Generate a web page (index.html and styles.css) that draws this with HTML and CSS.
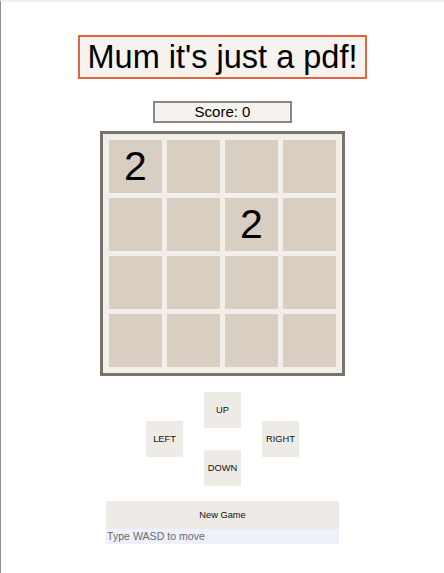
FILE: index.html
```html
<!DOCTYPE html>
<html lang="en">
<head>
    <meta charset="UTF-8">
    <meta name="viewport" content="width=device-width, initial-scale=1.0">
    <title>Mum it's just a pdf!</title>
    <link rel="stylesheet" href="styles.css">
</head>
<body>
    <div class="page">
        <h1 class="title">Mum it's just a pdf!</h1>
        <div class="score">Score: 0</div>

        <div class="board">
            <div class="cell">2</div>
            <div class="cell"></div>
            <div class="cell"></div>
            <div class="cell"></div>
            <div class="cell"></div>
            <div class="cell"></div>
            <div class="cell">2</div>
            <div class="cell"></div>
            <div class="cell"></div>
            <div class="cell"></div>
            <div class="cell"></div>
            <div class="cell"></div>
            <div class="cell"></div>
            <div class="cell"></div>
            <div class="cell"></div>
            <div class="cell"></div>
        </div>

        <div class="controls">
            <button class="ctrl up">UP</button>
            <button class="ctrl left">LEFT</button>
            <button class="ctrl right">RIGHT</button>
            <button class="ctrl down">DOWN</button>
        </div>

        <div class="footer">
            <button class="new-game">New Game</button>
            <div class="hint">Type WASD to move</div>
        </div>
    </div>
</body>
</html>
```

FILE: styles.css
```css
* {
    margin: 0;
    padding: 0;
    box-sizing: border-box;
    font-family: "Liberation Sans", Arial, sans-serif;
}
body {
    background: #fff;
    color: #000;
    border-left: 1px solid #8f8f8f;
    border-top: 2px solid #f1f1f1;
    min-height: 100vh;
}
.page {
    display: flex;
    flex-direction: column;
    align-items: center;
    padding-top: 33px;
}
.title {
    font-weight: normal;
    font-size: 32.5px;
    line-height: 38px;
    padding: 1px 8px 1px 8px;
    background: #f6f3ef;
    border: 2px solid #e4633f;
}
.score {
    margin-top: 22px;
    width: 139px;
    height: 22px;
    font-size: 15px;
    line-height: 18px;
    text-align: center;
    background: #f6f3ef;
    border: 2px solid #8a857e;
}
.board {
    margin-top: 8px;
    display: grid;
    grid-template-columns: repeat(4, 53px);
    grid-template-rows: repeat(4, 53px);
    gap: 5px;
    padding: 6px;
    background: #f2efea;
    border: 3px solid #79736b;
}
.cell {
    background: #d8cec2;
    display: flex;
    justify-content: center;
    align-items: center;
    font-size: 41px;
}
.controls {
    margin-top: 16px;
    display: grid;
    grid-template-columns: repeat(3, 37px);
    grid-template-rows: repeat(4, 7px);
    column-gap: 21px;
    row-gap: 22px;
}
.ctrl {
    border: none;
    background: #eeebe6;
    color: #111;
    font-size: 9.3px;
}
.up {
    grid-column: 2;
    grid-row: 1 / 3;
}
.left {
    grid-column: 1;
    grid-row: 2 / 4;
}
.right {
    grid-column: 3;
    grid-row: 2 / 4;
}
.down {
    grid-column: 2;
    grid-row: 3 / 5;
}
.footer {
    margin-top: 15px;
    width: 233px;
}
.new-game {
    display: block;
    width: 100%;
    height: 28px;
    border: none;
    background: #eeebe6;
    color: #111;
    font-size: 9.3px;
}
.hint {
    height: 15px;
    padding-left: 1px;
    font-size: 10.6px;
    line-height: 15px;
    color: #6b6b6b;
    background: #eef1fc;
}
```
